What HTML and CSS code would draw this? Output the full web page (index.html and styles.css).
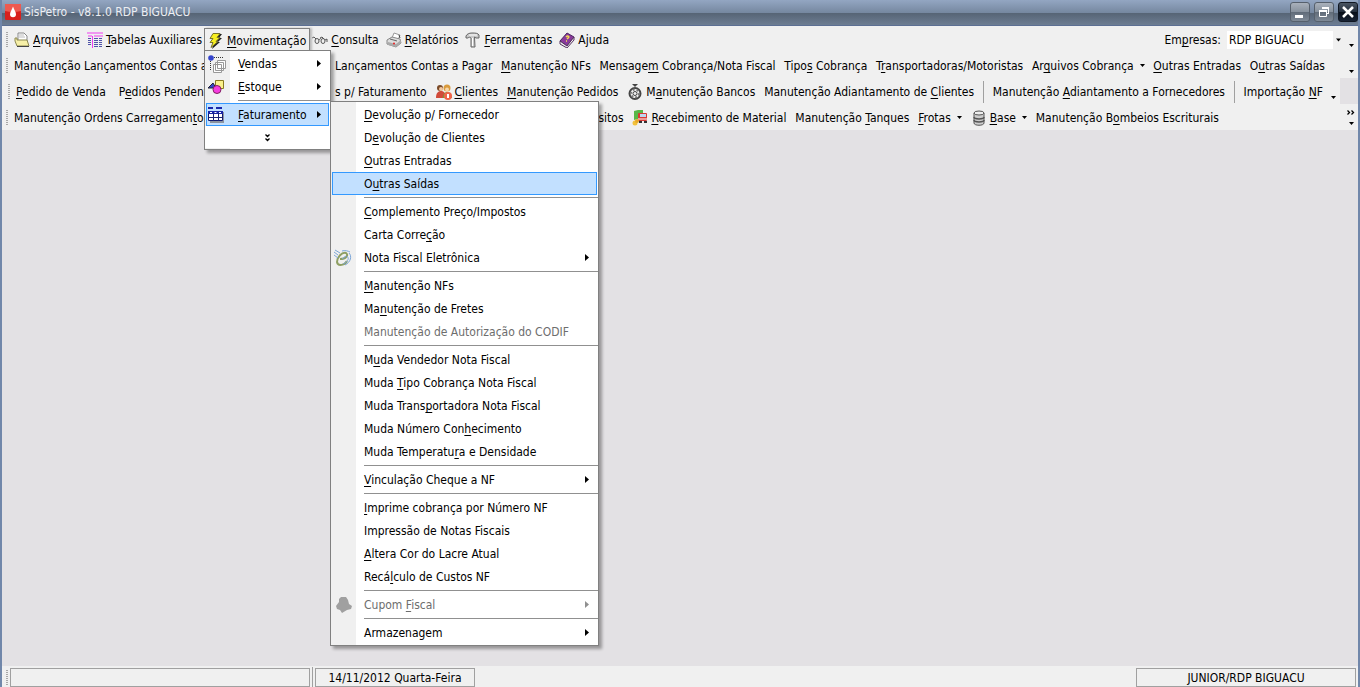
FILE: index.html
```html
<!DOCTYPE html>
<html lang="pt-BR">
<head>
<meta charset="utf-8">
<title>SisPetro - v8.1.0 RDP BIGUACU</title>
<link rel="stylesheet" href="styles.css">
</head>
<body>
<div class="window">
  <header class="titlebar">
    <svg class="app-icon" viewBox="0 0 16 16"><rect width="16" height="16" rx="1" fill="#d8201c"/><path d="M0 0h16v7Q8 9 0 7z" fill="#ee5a50"/><path d="M8 2.500C9 6 11 8 11 10.300a3 3 0 0 1-6 0C5 8 7 6 8 2.500z" fill="#fff"/></svg>
    <h1 class="title">SisPetro - v8.1.0 RDP BIGUACU</h1>
    <div class="window-buttons">
      <button class="win-btn" aria-label="Minimizar"><svg viewBox="1 1 18 18"><path d="M5 13h8v3H5z" fill="#fff"/></svg></button>
      <button class="win-btn" aria-label="Restaurar"><svg viewBox="1 1 18 18" fill="none" stroke="#fff"><path d="M5.500 8.500h7v6h-7zM5.500 9.500h7M8 5.500h7M14.500 5v7M8.500 5v2M14 11.500h-1"/><path d="M5 9h8M8 6h7" stroke-width="2"/></svg></button>
      <button class="win-btn win-close" aria-label="Fechar"><svg viewBox="1 1 18 18"><path d="M5 5l10 10M15 5L5 15" stroke="#fff" stroke-width="2.500"/></svg></button>
    </div>
  </header>

  <nav class="toolbars">
    <div class="bar">
      <span class="grip"></span>
      <div class="menus">
        <button class="tool"><svg class="icon" viewBox="0 0 16 16"><path d="M4 1h6l3 3v6H4z" fill="#fff" stroke="#888"/><path d="M5 3h5M5 5h6" stroke="#bbb"/><path d="M1 6h2v2h10l2 6H3L1 9z" fill="#f7f0a8" stroke="#8c8850"/><path d="M3 14.500h12" stroke="#444"/></svg><span><u>A</u>rquivos</span></button>
        <button class="tool"><svg class="icon" viewBox="0 0 16 16" fill="none"><path d="M0 1h16M1 4h4M7 4h9M5.500 4v12" stroke="#f03cf0"/><path d="M1 6.500h3M1 8.500h3M1 10.500h3M1 12.500h3M7 6.500h4M12 6.500h3M7 8.500h4M12 8.500h3M7 10.500h4M12 10.500h3M7 12.500h4M12 12.500h3M7 14.500h4M12 14.500h3" stroke="#5054a8"/></svg><span><u>T</u>abelas Auxiliares</span></button>
        <div class="dropdown">
          <button class="tool tool-open" aria-expanded="true"><svg class="icon" viewBox="0 0 16 16"><path d="M6 1h8l-3 4h3l-4 4h2l-8 7 2-6H3l3-4H3z" fill="#222"/><path d="M5 .5h7l-3 4h3l-4 4h2l-7 6 2-5H2l3-4H2z" fill="#f8f020" stroke="#77742a"/></svg><span><u>M</u>ovimentação</span></button>
          <div class="menu menu-main" role="menu">
            <button class="item"><svg class="icon icon-wide" viewBox="0 0 18 18"><circle cx="3" cy="3" r="2.800" fill="#3444cc"/><path d="M6 2.500h9M2.500 6v9" stroke="#333" stroke-dasharray="1 1"/><path d="M9.500 5.500h8v8h-8zM7.500 7.500h8v8h-8zM5.500 9.500h8v8h-8z" fill="#fff" stroke="#999"/></svg><span><u>V</u>endas</span><svg class="arrow" viewBox="0 0 4 7"><path d="M0 0l4 3.500L0 7z"/></svg></button>
            <button class="item"><svg class="icon" viewBox="0 0 16 16"><path d="M0 9l5-5 3 5z" fill="#3444cc" stroke="#223"/><path d="M7.500 1.500h8v8h-8z" fill="#fbf08a" stroke="#8a7a20"/><circle cx="9" cy="10.500" r="4" fill="#f63ce0" stroke="#802060"/></svg><span><u>E</u>stoque</span><svg class="arrow" viewBox="0 0 4 7"><path d="M0 0l4 3.500L0 7z"/></svg></button>
            <hr>
            <button class="item item-active" aria-expanded="true"><svg class="icon" viewBox="0 0 16 16"><path d="M2 5h14v11H2z" fill="#8b93a0"/><path d="M0 0h5v2H0zM8 0h6v2H8z" fill="#1826a8"/><path d="M.5 4.500h14v9H.5z" fill="#fff" stroke="#111a70"/><path d="M0 4h15v3H0z" fill="#1826a8"/><path d="M5.500 6v8M10.500 6v8M1 10.500h13" stroke="#1a2474"/><path d="M2 5.500h2M6.500 5.500h2M11 5.500h2" stroke="#fff"/></svg><span><u>F</u>aturamento</span><svg class="arrow" viewBox="0 0 4 7"><path d="M0 0l4 3.500L0 7z"/></svg></button>
            <button class="expand" aria-label="Mostrar mais"><svg viewBox="0 0 5 8" fill="none" stroke="#000" stroke-width="1.300"><path d="M.5.500l2 2 2-2M.5 4.500l2 2 2-2"/></svg></button>
            <div class="menu menu-sub" role="menu">
              <button class="item"><span><u>D</u>evolução p/ Fornecedor</span></button>
              <button class="item"><span>D<u>e</u>volução de Clientes</span></button>
              <button class="item"><span><u>O</u>utras Entradas</span></button>
              <button class="item item-active"><span>O<u>u</u>tras Saídas</span></button>
              <hr>
              <button class="item"><span><u>C</u>omplemento Preço/Impostos</span></button>
              <button class="item"><span>Carta Corre<u>ç</u>ão</span></button>
              <button class="item"><svg class="icon icon-wide" viewBox="0 0 18 18" fill="none"><path d="M6 10C12 10 15 6 12 4 8 3 3 8 3 13c1 5 8 3 10-1" stroke="#8e9f63" stroke-width="2"/><path d="M0 3l4 3M0 6l4 3M1 1l5 3M8 2c3-1 6 0 8 1M15 4c3 3 2 9-4 12M13 7c3 3 0 6-4 8M8 10l4-3" stroke="#7ba6d8"/></svg><span>Nota Fiscal Eletrônica</span><svg class="arrow" viewBox="0 0 4 7"><path d="M0 0l4 3.500L0 7z"/></svg></button>
              <hr>
              <button class="item"><span><u>M</u>anutenção NFs</span></button>
              <button class="item"><span>Ma<u>n</u>utenção de Fretes</span></button>
              <button class="item" disabled><span>Manutenção de Autorização do CODIF</span></button>
              <hr>
              <button class="item"><span>M<u>u</u>da Vendedor Nota Fiscal</span></button>
              <button class="item"><span>Muda <u>T</u>ipo Cobrança Nota Fiscal</span></button>
              <button class="item"><span>Muda Trans<u>p</u>ortadora Nota Fiscal</span></button>
              <button class="item"><span>Muda Número Con<u>h</u>ecimento</span></button>
              <button class="item"><span>Muda Temperatu<u>r</u>a e Densidade</span></button>
              <hr>
              <button class="item"><span><u>V</u>inculação Cheque a NF</span><svg class="arrow" viewBox="0 0 4 7"><path d="M0 0l4 3.500L0 7z"/></svg></button>
              <hr>
              <button class="item"><span><u>I</u>mprime cobrança por Número NF</span></button>
              <button class="item"><span>Impressão de Notas Fiscais</span></button>
              <button class="item"><span><u>A</u>ltera Cor do Lacre Atual</span></button>
              <button class="item"><span>Recá<u>l</u>culo de Custos NF</span></button>
              <hr>
              <button class="item" disabled><svg class="icon icon-wide" viewBox="0 0 18 18"><path d="M5 3l2-2 5 0 2 3 1 4 3 2-1 3-4 1-5 3-2-3-3-1-1-3 3-4z" fill="#a0a0a0"/></svg><span>Cupom <u>F</u>iscal</span><svg class="arrow" viewBox="0 0 4 7"><path d="M0 0l4 3.500L0 7z"/></svg></button>
              <hr>
              <button class="item"><span>Armazenagem</span><svg class="arrow" viewBox="0 0 4 7"><path d="M0 0l4 3.500L0 7z"/></svg></button>
            </div>
          </div>
        </div>
        <button class="tool"><svg class="icon" viewBox="0 0 16 16" fill="none" stroke="#555"><path d="M0 6l2-1 2 2M7 8c1-1 1-2 2-1"/><ellipse cx="5" cy="9" rx="2" ry="2.500"/><ellipse cx="11" cy="9" rx="2" ry="2.500"/><path d="M8 6l2-1 2 2M13 8l2-1v3"/></svg><span><u>C</u>onsulta</span></button>
        <button class="tool"><svg class="icon" viewBox="0 0 16 16"><path d="M6 6l2-5 6 2-2 5z" fill="#fff" stroke="#999"/><path d="M1 8l5-3 8 2 1 4-5 4-9-3z" fill="#ddd" stroke="#888"/><path d="M2 10l8 2v3l-8-2zM10 12l5-4v3l-5 4z" fill="#aaa"/><path d="M4 7l7 2" stroke="#666"/><circle cx="8" cy="11.500" r="1" fill="#e22"/><path d="M13 3l1 3" stroke="#444"/></svg><span><u>R</u>elatórios</span></button>
        <button class="tool"><svg class="icon" viewBox="0 0 16 16"><path d="M1 4c1-2 3-3 6-3s6 0 7 2v3h-3L9.500 5 10 15H6V6C5 5 4 5 3 6H1z" fill="#c9c9c9" stroke="#666"/><path d="M7.500 6v8M4 3h8" stroke="#fff"/></svg><span><u>F</u>erramentas</span></button>
        <button class="tool"><svg class="icon" viewBox="0 0 16 16"><path d="M1 9l7-8 7 4-7 9z" fill="#8a3a9c" stroke="#4a2560"/><path d="M1 9v3l7 4 7-8V5l-7 9z" fill="#eee" stroke="#553060"/><path d="M7 5c2-2 4 0 2 1l-1 1M7 9l1 0" stroke="#f5dc50" stroke-width="1.500" fill="none"/></svg><span>Ajuda</span></button>
      </div>
      <div class="company">
        <label for="empresa">Em<u>p</u>resas:</label>
        <div class="combo"><select id="empresa"><option>RDP BIGUACU</option></select><svg class="caret" viewBox="0 0 5 3"><path d="M0 0h5L2.500 3z"/></svg></div>
      </div>
      <button class="more" aria-label="Opções da barra"><svg class="caret" viewBox="0 0 5 3"><path d="M0 0h5L2.500 3z"/></svg></button>
    </div>

    <div class="bar">
      <span class="grip"></span>
      <div class="lead"><button class="tool">Manutenção Lançamentos Contas a</button></div>
      <div class="links">
        <button class="tool">Lançamentos Contas a Pagar</button>
        <button class="tool"><span><u>M</u>anutenção NFs</span></button>
        <button class="tool"><span>Mensage<u>m</u> Cobrança/Nota Fiscal</span></button>
        <button class="tool"><span>Tipo<u>s</u> Cobrança</span></button>
        <button class="tool"><span>T<u>r</u>ansportadoras/Motoristas</span></button>
        <button class="tool"><span>Ar<u>q</u>uivos Cobrança</span><svg class="caret" viewBox="0 0 5 3"><path d="M0 0h5L2.500 3z"/></svg></button>
        <button class="tool"><span><u>O</u>utras Entradas</span></button>
        <button class="tool"><span>O<u>u</u>tras Saídas</span></button>
      </div>
      <button class="more" aria-label="Opções da barra"><svg class="caret" viewBox="0 0 5 3"><path d="M0 0h5L2.500 3z"/></svg></button>
    </div>

    <div class="bar bar-short">
      <span class="grip"></span>
      <div class="lead"><button class="tool"><span><u>P</u>edido de Venda</span></button><button class="tool"><span>P<u>e</u>didos Pendentes</span></button></div>
      <div class="links">
        <button class="tool">s p/ Faturamento</button>
        <button class="tool"><svg class="icon" viewBox="0 0 16 16"><circle cx="4" cy="4" r="3" fill="#7a4a28"/><circle cx="11" cy="4" r="3.500" fill="#d99a3c"/><circle cx="5" cy="5" r="2" fill="#f2c79c"/><circle cx="11" cy="5.500" r="2" fill="#f7d6a8"/><path d="M0 14c0-5 2-7 5-7s5 2 5 7z" fill="#d14b3a"/><path d="M7 14c0-4 2-6 4-6s5 2 5 6z" fill="#6da03a"/><circle cx="12" cy="12" r="4" fill="#f0644a"/><path d="M12 10v4" stroke="#fff" stroke-width="2"/></svg><span><u>C</u>lientes</span></button>
        <button class="tool"><span><u>M</u>anutenção Pedidos</span></button>
        <button class="tool"><svg class="icon" viewBox="0 0 16 16"><path d="M5 0h6L8 3z" fill="#444"/><circle cx="8" cy="9.500" r="5.500" fill="#eee" stroke="#444" stroke-width="2"/><circle cx="8" cy="9.500" r="4" fill="none" stroke="#777" stroke-width="2" stroke-dasharray="2 2"/><circle cx="8" cy="9.500" r="2" fill="#eee" stroke="#444"/></svg><span>M<u>a</u>nutenção Bancos</span></button>
        <button class="tool"><span>Manutenção Adiantamento de <u>C</u>lientes</span></button>
        <span class="divider"></span>
        <button class="tool"><span>Manutenção <u>A</u>diantamento a Fornecedores</span></button>
        <span class="divider"></span>
        <button class="tool"><span>Importação <u>N</u>F</span></button>
      </div>
      <button class="more" aria-label="Opções da barra"><svg class="caret" viewBox="0 0 5 3"><path d="M0 0h5L2.500 3z"/></svg></button>
    </div>

    <div class="bar">
      <span class="grip"></span>
      <div class="lead"><button class="tool"><span>Manutenção Ordens Carregamen<u>t</u>o</span></button></div>
      <div class="links links-right">
        <button class="tool">Depósitos</button>
        <button class="tool"><svg class="icon" viewBox="0 0 16 16"><path d="M2 1l4-1v9l-4 1zM6 0h5v7H6z" fill="#58b848"/><rect x="6" y="3" width="9" height="8" rx="1" fill="#d83a34"/><path d="M8 4h6v3H8z" fill="#bcd8f0"/><path d="M6 9h9" stroke="#fff"/><path d="M7 12h3M12 12h3" stroke="#333" stroke-width="2"/><circle cx="3" cy="13" r="2.500" fill="#f2c23c"/><circle cx="5" cy="11" r="2" fill="#e8a828"/></svg><span><u>R</u>ecebimento de Material</span></button>
        <button class="tool"><span>Manutenção <u>T</u>anques</span></button>
        <button class="tool"><span><u>F</u>rotas</span><svg class="caret" viewBox="0 0 5 3"><path d="M0 0h5L2.500 3z"/></svg></button>
        <button class="tool"><svg class="icon" viewBox="0 0 16 16" fill="#ccc" stroke="#555"><path d="M3 3v10c0 3 10 3 10 0V3"/><path d="M3 10c0 2.500 10 2.500 10 0M3 7c0 2.500 10 2.500 10 0" stroke-width="1.500"/><ellipse cx="8" cy="3" rx="5" ry="2" fill="#eee"/></svg><span><u>B</u>ase</span><svg class="caret" viewBox="0 0 5 3"><path d="M0 0h5L2.500 3z"/></svg></button>
        <button class="tool"><span>Manutenção B<u>o</u>mbeios Escriturais</span></button>
      </div>
      <button class="more more-overflow" aria-label="Mais botões"><svg class="chevrons" viewBox="0 0 8 5" fill="none" stroke="#000" stroke-width="1.300"><path d="M.5.500l2 2-2 2M4.500.500l2 2-2 2"/></svg><svg class="caret" viewBox="0 0 5 3"><path d="M0 0h5L2.500 3z"/></svg></button>
    </div>
  </nav>

  <main class="workspace"></main>

  <footer class="statusbar">
    <span class="grip"></span>
    <div class="panel panel-message"></div>
    <span class="divider"></span>
    <div class="panel panel-date">14/11/2012 Quarta-Feira</div>
    <div class="panel panel-user">JUNIOR/RDP BIGUACU</div>
  </footer>
</div>
</body>
</html>
```
FILE: styles.css
```css
* { box-sizing: border-box; }

body {
  margin: 0;
  font: 12px/16px Tahoma, "DejaVu Sans Condensed", "Noto Sans", sans-serif;
  color: #000;
}

button, select {
  font: inherit;
  color: inherit;
  background: none;
  border: 0;
  padding: 0;
  margin: 0;
}

svg { display: block; flex: none; }
u { text-underline-offset: 2px; text-decoration-thickness: 1px; text-decoration-skip-ink: none; }

.window {
  display: flex;
  flex-direction: column;
  height: 100vh;
  overflow: hidden;
  background: #e3e1e4;
  border: solid #7187aa;
  border-width: 0 2px;
}

/* Title bar */
.titlebar {
  display: flex;
  align-items: center;
  gap: 3px;
  height: 26px;
  flex: none;
  margin: 0 -2px;
  padding: 0 2px 2px 5px;
  background: linear-gradient(#93a6c2 0, #75879f 50%, #566475 50%, #6d7d92 96%, #5c6f93 96%);
}
.app-icon { width: 16px; height: 16px; }
.title { margin: 0; font-size: 12px; font-weight: normal; color: #eceef2; flex: 1; }
.window-buttons { display: flex; gap: 4px; }
.win-btn {
  width: 20px;
  height: 20px;
  border: 1px solid #56606c;
  border-radius: 3px;
  background: linear-gradient(#a9b1bb, #87919d 50%, #606b78 50%, #7e8996);
}
.win-btn svg { width: 18px; height: 18px; }
.win-close { background: linear-gradient(#4a5563, #222c39 50%, #060c16 50%, #182334); border-color: #101722; }

/* Toolbars */
.toolbars { flex: none; background: #f0f0f0; }
.bar { display: flex; align-items: center; height: 26px; padding: 2px 0 0 4px; }
.bar-short { margin-right: 18px; box-shadow: 18px 0 #e3e1e4; padding-left: 6px; }
.grip {
  width: 2px;
  height: 16px;
  flex: none;
  background: repeating-linear-gradient(#a8a8a8 0 1px, transparent 1px 2px);
}
.tool { display: flex; align-items: center; gap: 3px; height: 22px; white-space: nowrap; }
.icon { width: 16px; height: 16px; }
.caret { width: 5px; height: 3px; margin: 0 0 2px 3px; }
.menus { display: flex; align-items: center; gap: 7px; padding-left: 6px; }
.lead { display: flex; gap: 13px; padding-left: 6px; flex: 0 0 327px; overflow: hidden; }
.bar-short .lead { flex-basis: 325px; }
.links { display: flex; align-items: center; justify-content: space-between; flex: 1; padding-right: 19px; }
.bar-short .links { padding-right: 3px; }
.links-right { padding: 0 125px 0 235px; }
.divider { width: 1px; height: 22px; background: #a0a0a0; flex: none; }
.more {
  display: flex;
  flex-direction: column;
  align-items: center;
  justify-content: flex-end;
  gap: 7px;
  width: 14px;
  height: 14px;
  flex: none;
}
.more .caret { margin: 0; }
.chevrons { width: 8px; height: 5px; }

.company { display: flex; align-items: center; gap: 6px; margin-left: auto; }
.combo { display: flex; align-items: center; width: 117px; background: #fff; position: relative; height: 18px; }
.combo select { appearance: none; flex: 1; height: 18px; padding: 0 2px; outline: 0; }
.combo .caret {
  position: absolute;
  right: 0;
  top: 0;
  width: 11px;
  height: 18px;
  margin: 0;
  padding: 0 3px;
  background: #f0f0f0;
  pointer-events: none;
}

/* Drop-down menus */
.dropdown { position: relative; margin: 0 -5px; }
.tool-open {
  position: relative;
  height: 24px;
  padding: 0 3px;
  border: 1px solid #808080;
  border-bottom: 0;
  background: #f0f0f0;
  box-shadow: 2px 0 2px #bbb;
}
.menu {
  position: absolute;
  z-index: 2;
  padding: 1px 0;
  border: 1px solid #808080;
  background: linear-gradient(90deg, #f0f0f0 25px, #fff 25px);
  box-shadow: 3px 3px 3px #0005;
}
.menu-main { top: 22px; left: 0; width: 127px; }
.menu-sub { top: 50px; left: 125px; width: 269px; }
.menu hr { height: 1px; margin: 2px 0 2px 33px; border: 0; background: #909090; }
.item {
  display: grid;
  grid-template-columns: 30px 1fr 4px;
  align-items: center;
  width: calc(100% - 2px);
  height: 23px;
  margin: 0 1px;
  padding: 0 7px 0 1px;
  border: 1px solid transparent;
  text-align: left;
  white-space: nowrap;
}
.item > span { grid-column: 2; grid-row: 1; }
.item > .icon { grid-column: 1; grid-row: 1; }
.item > .icon-wide { width: 18px; height: 18px; }
.arrow { width: 4px; height: 7px; grid-column: 3; grid-row: 1; }
.item-active { background: #c2e0ff; border-color: #3399ff; }
.item:disabled { color: #6d6d6d; }
.item:disabled .arrow { fill: #909090; }
.expand { display: flex; align-items: center; justify-content: center; width: 100%; height: 22px; padding-top: 2px; background: #fff; }
.expand svg { width: 5px; height: 8px; }

/* Workspace and status bar */
.workspace { flex: 1; }
.statusbar {
  display: flex;
  align-items: center;
  gap: 2px;
  height: 21px;
  flex: none;
  padding: 2px 2px 0 4px;
  background: #f0f0f0;
}
.panel { height: 19px; border: 1px solid #a0a0a0; text-align: center; line-height: 18px; }
.panel-message { width: 300px; }
.panel-date { width: 160px; }
.panel-user { width: 220px; margin-left: auto; }
```
